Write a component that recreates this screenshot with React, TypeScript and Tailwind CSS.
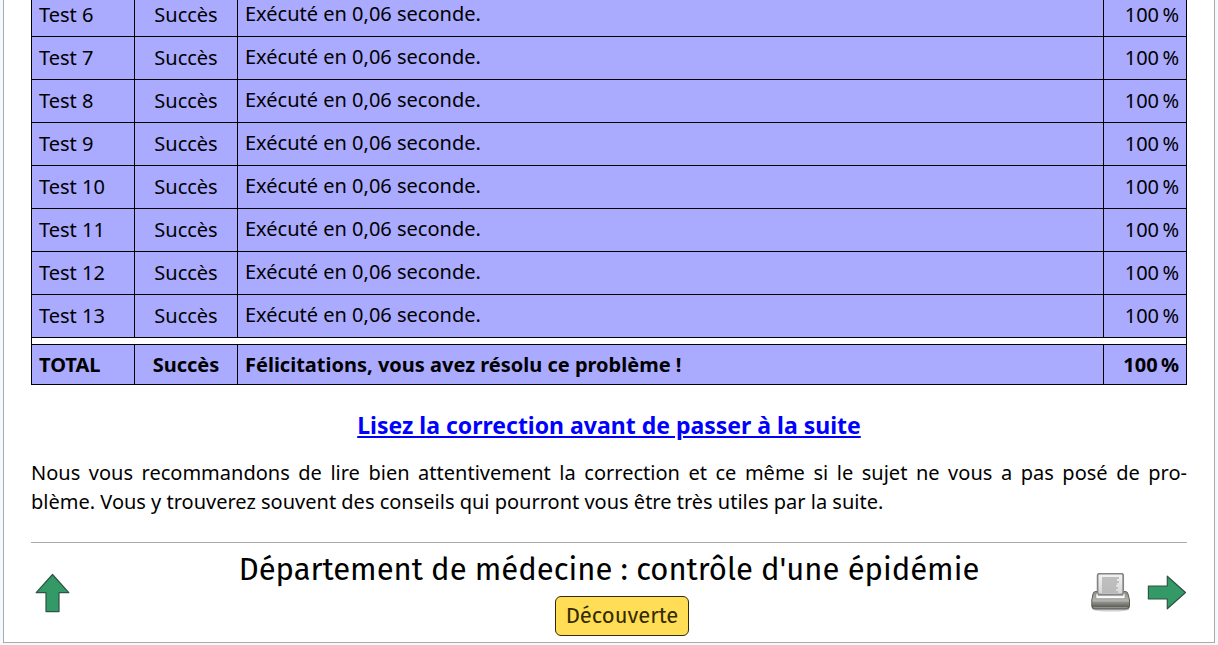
const tests = [6, 7, 8, 9, 10, 11, 12, 13];

function Arrow({ className }: { className?: string }) {
  return (
    <svg viewBox="0 0 40 40" className={`size-10 ${className ?? ""}`} aria-hidden="true">
      <path
        d="M19.5 1.5 L35.8 19.7 H26 V38.6 H13 V19.7 H3.2 Z"
        fill="#339966"
        stroke="#2f5443"
        strokeWidth="1.2"
        strokeLinejoin="round"
      />
    </svg>
  );
}

function Printer() {
  return (
    <svg viewBox="0 0 40 40" className="size-10" aria-hidden="true">
      <defs>
        <linearGradient id="body" x1="0" y1="0" x2="0" y2="1">
          <stop offset="0" stopColor="#8c8c88" />
          <stop offset="0.35" stopColor="#a9a9a4" />
          <stop offset="0.55" stopColor="#b4b4af" />
          <stop offset="0.6" stopColor="#94948f" />
          <stop offset="0.88" stopColor="#5f5f5a" />
          <stop offset="1" stopColor="#82827d" />
        </linearGradient>
        <linearGradient id="sheet" x1="0" y1="0" x2="0" y2="1">
          <stop offset="0" stopColor="#f4f4f4" />
          <stop offset="1" stopColor="#d4d4d4" />
        </linearGradient>
      </defs>
      <ellipse cx="20" cy="36.5" rx="18.5" ry="2" fill="#000" opacity="0.18" />
      <path
        d="M4.5 18.5 H34.5 Q36.5 18.5 37 21 L38.5 27 V33 Q38.5 36 35.5 36 H3.5 Q0.8 36 0.8 33 V27 L2 21 Q2.5 18.5 4.5 18.5 Z"
        fill="url(#body)"
        stroke="#5c5c58"
      />
      <rect x="6.6" y="0.6" width="25.6" height="21" rx="2" fill="url(#sheet)" stroke="#858585" strokeWidth="1.7" />
      <path
        d="M11 5 H28 M11 7 H26 M11 9 H28 M11 11 H26 M11 13 H25 M11 15 H27 M11 17 H25 M11 19 H27"
        stroke="#b0b0b0"
        strokeWidth="1.5"
      />
      <path d="M5 20.8 H7 V22.6 H32 V20.8 H34 V25.6 H5 Z" fill="#fbfbfb" stroke="#92928e" strokeWidth="0.6" />
      <path d="M2.5 34.6 H36.5" stroke="#aaaaa5" strokeWidth="0.7" />
    </svg>
  );
}

const cell = "border border-black px-[7px] py-0";

export default function App() {
  return (
    <div className="overflow-hidden bg-[#f4f8ff] px-[3px] pb-[2px] font-['Noto_Sans',sans-serif] text-[20px] text-black">
      <main className="border-x border-b border-[#aaaaaa] bg-white px-[27px]">
        <table className="-mt-[7px] w-full table-fixed border-collapse leading-7">
          <colgroup>
            <col className="w-[103px]" />
            <col className="w-[103px]" />
            <col />
            <col className="w-[83px]" />
          </colgroup>
          <tbody>
            {tests.map((n) => (
              <tr key={n} className="h-[43px] bg-[#aaaaff]">
                <td className={cell}>Test {n}</td>
                <td className={`${cell} text-center`}>Succès</td>
                <td className="border border-black px-[7px] pt-0 pb-[2px]">Exécuté en 0,06 seconde.</td>
                <td className={`${cell} text-right`}>100{"\u202f"}%</td>
              </tr>
            ))}
            <tr className="h-[7px]">
              <td colSpan={4} className="border border-black p-0" />
            </tr>
            <tr className="h-10 bg-[#aaaaff] font-bold">
              <td className={cell}>TOTAL</td>
              <td className={`${cell} text-center`}>Succès</td>
              <td className={cell}>Félicitations, vous avez résolu ce problème !</td>
              <td className={`${cell} text-right`}>100{"\u202f"}%</td>
            </tr>
          </tbody>
        </table>

        <h2 className="mt-6 text-center text-[23px] leading-8 font-bold">
          <a href="#correction" className="text-[#0000ff] underline">
            Lisez la correction avant de passer à la suite
          </a>
        </h2>
        <p className="mt-[17px] text-justify leading-[29px]">
          <span className="block [text-align-last:justify]">
            Nous vous recommandons de lire bien attentivement la correction et ce même si le sujet ne vous a pas posé
            de pro-
          </span>
          <span className="block">
            blème. Vous y trouverez souvent des conseils qui pourront vous être très utiles par la suite.
          </span>
        </p>

        <footer className="mt-[26px] flex items-center justify-between border-t border-[#aaaaaa] pt-1 pb-[6px]">
          <a href="#haut" aria-label="Remonter" className="mt-[3px] w-24 pl-[2px]">
            <Arrow />
          </a>
          <div className="flex flex-col items-center font-['Fira_Sans','Noto_Sans_CJK_SC',sans-serif]">
            <h1 className="mb-1 text-[31px] leading-[45px]">Département de médecine : contrôle d'une épidémie</h1>
            <button
              type="button"
              className="ml-[26px] h-10 rounded-[6px] border border-[#332b0b] bg-[#ffdd55] px-[10px] text-[22px] leading-9 text-[#332b00]"
            >
              Découverte
            </button>
          </div>
          <div className="mt-[3px] flex w-24 gap-4">
            <a href="#imprimer" aria-label="Imprimer">
              <Printer />
            </a>
            <a href="#suite" aria-label="Suite">
              <Arrow className="rotate-90" />
            </a>
          </div>
        </footer>
      </main>
    </div>
  );
}
